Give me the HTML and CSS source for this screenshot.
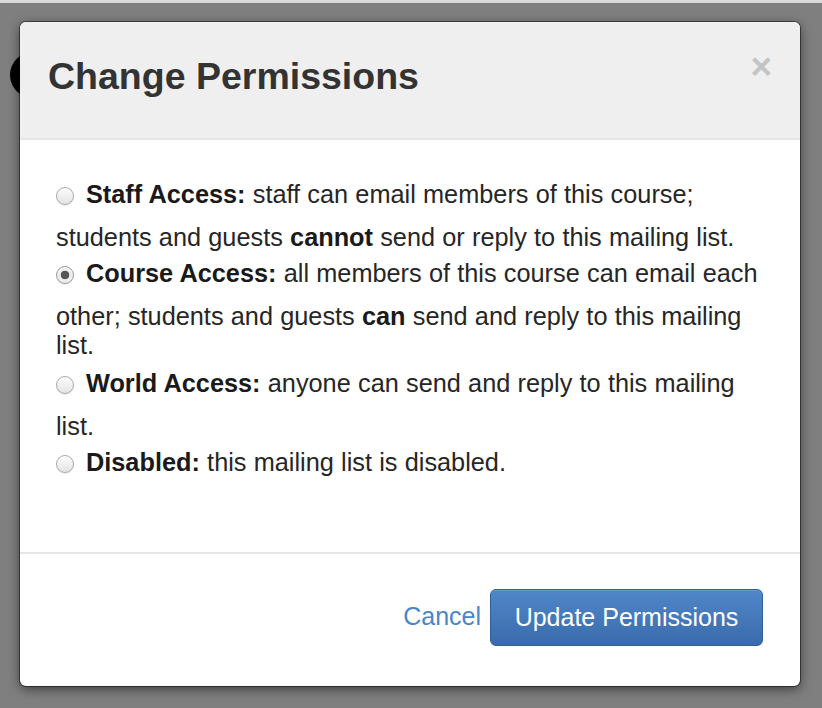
FILE: index.html
```html
<!DOCTYPE html>
<html>
<head>
<meta charset="utf-8">
<link rel="stylesheet" href="styles.css">
</head>
<body>
<div class="topstrip"></div>
<div class="page">
  <div class="avatar"></div>
  <div class="modal">
    <div class="modal-header">
      <h3 class="modal-title">Change Permissions</h3>
      <span class="close">&times;</span>
    </div>
    <div class="modal-body">
      <label class="opt"><span class="radio"></span><b>Staff Access:</b> staff can email members of this course; students and guests <b>cannot</b> send or reply to this mailing list.</label>
      <label class="opt"><span class="radio checked"></span><b>Course Access:</b> all members of this course can email each other; students and guests <b>can</b> send and reply to this mailing list.</label>
      <label class="opt opt-world"><span class="radio"></span><b>World Access:</b> anyone can send and reply to this mailing list.</label>
      <label class="opt"><span class="radio"></span><b>Disabled:</b> this mailing list is disabled.</label>
    </div>
    <div class="modal-footer">
      <a class="cancel">Cancel</a>
      <button class="btn-primary">Update Permissions</button>
    </div>
  </div>
</div>
</body>
</html>
```
FILE: styles.css
```css
html, body {
  margin: 0;
  padding: 0;
}
body {
  background: #7f7f7f;
  font-family: "Liberation Sans", Arial, Helvetica, sans-serif;
  color: #333;
  height: 708px;
  overflow: hidden;
}
.topstrip {
  height: 3px;
  background: #d9d9d9;
}
.page {
  position: relative;
  padding: 19px 0 0 20px;
}
.avatar {
  position: absolute;
  left: 10px;
  top: 49px;
  width: 46px;
  height: 46px;
  border-radius: 50%;
  background: #000;
}
.modal {
  position: relative;
  width: 780px;
  background: #fff;
  border-radius: 6px;
  box-shadow: 0 0 0 1px rgba(0,0,0,.45), 0 3px 12px rgba(0,0,0,.55);
  overflow: hidden;
}
.modal-header {
  background: #efefef;
  border-bottom: 2px solid #e5e5e5;
  display: flex;
  align-items: center;
  justify-content: space-between;
  padding: 0 28px 6px 28px;
  box-sizing: border-box;
  height: 118px;
}
.modal-title {
  margin: 0;
  font-size: 37.5px;
  font-weight: bold;
  color: #333;
  line-height: 1.15;
}
.close {
  font-size: 37px;
  font-weight: bold;
  color: #c4c4c4;
  line-height: 1;
  margin-bottom: 22px;
}
.modal-body {
  padding: 34px 36px 60px 36px;
  font-size: 25.3px;
  word-spacing: 0.2px;
  line-height: 29px;
  color: #262626;
}
.opt {
  display: block;
  margin-bottom: 1px;
}
.opt-world {
  margin-top: 3px;
}
.opt b {
  color: #1a1a1a;
}
.radio {
  display: inline-block;
  box-sizing: border-box;
  width: 18px;
  height: 18px;
  border-radius: 50%;
  border: 1px solid #a9a9a9;
  background: linear-gradient(#fdfdfd, #e4e4e4);
  box-shadow: inset 0 1px 1px rgba(255,255,255,.8), 0 1px 1px rgba(0,0,0,.08);
  vertical-align: -20px;
  margin: 13px 12px 18px 0;
}
.radio.checked {
  background: radial-gradient(circle, #555 0, #555 4px, #ececec 4.6px, #f3f3f3 100%);
  border-color: #9a9a9a;
}
.modal-footer {
  border-top: 2px solid #e5e5e5;
  padding: 35px 37px 40px 37px;
  display: flex;
  justify-content: flex-end;
  align-items: center;
}
.cancel {
  font-size: 25px;
  color: #4a86c7;
  margin-right: 9px;
  margin-top: -3px;
}
.btn-primary {
  font-family: "Liberation Sans", Arial, Helvetica, sans-serif;
  font-size: 25px;
  line-height: 29px;
  color: #fff;
  height: 57px;
  width: 273px;
  padding: 0;
  border: 1px solid #2f5f9c;
  border-radius: 6px;
  background: linear-gradient(#4f87c9, #3a6bab);
  box-shadow: inset 0 1px 0 rgba(255,255,255,.15);
}
```
